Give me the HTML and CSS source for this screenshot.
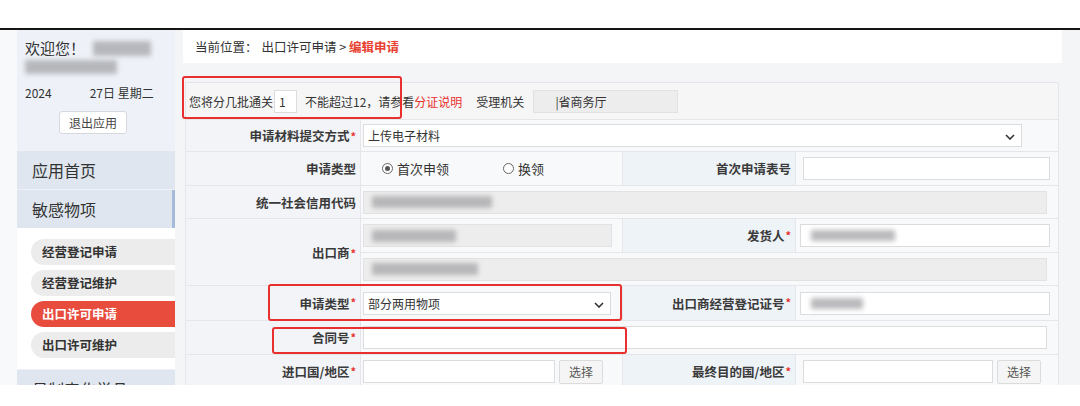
FILE: index.html
```html
<!DOCTYPE html>
<html lang="zh-CN">
<head>
<meta charset="utf-8">
<title>编辑申请</title>
<link rel="stylesheet" href="styles.css">
</head>
<body>
<div class="page">
  <div class="topband"></div>
  <div class="app">
    <aside class="sidebar">
      <div class="side-panel">
        <div class="user">
          <div class="welcome">欢迎您！<span class="blur b1"></span></div>
          <div class="blur-line"><span class="blur b2"></span></div>
          <div class="date">2024<span class="gap"></span>27日 星期二</div>
          <div class="logout-wrap"><span class="logout">退出应用</span></div>
        </div>
        <nav class="menu">
          <div class="menu-item">应用首页</div>
          <div class="menu-item active">敏感物项</div>
          <div class="submenu">
            <div class="pill">经营登记申请</div>
            <div class="pill">经营登记维护</div>
            <div class="pill on">出口许可申请</div>
            <div class="pill">出口许可维护</div>
          </div>
          <div class="menu-item">易制毒化学品</div>
        </nav>
      </div>
    </aside>
    <main class="main">
      <div class="crumb">当前位置：<span class="path">出口许可申请 &gt; </span><span class="cur">编辑申请</span></div>
      <div class="form">
        <div class="batch span4">
          <span>您将分几批通关</span>
          <span class="inp small">1</span>
          <span class="hint">不能超过12，请参看<span class="red">分证说明</span></span>
          <span class="org">受理机关</span>
          <span class="inp ro orgbox">|省商务厅</span>
        </div>

        <div class="lab">申请材料提交方式<i>*</i></div>
        <div class="val span3"><span class="inp sel w-full-sel">上传电子材料<svg class="chev" width="10" height="6" viewBox="0 0 10 6"><path d="M1 1 L5 5 L9 1" fill="none" stroke="#333" stroke-width="1.6"/></svg></span></div>

        <div class="lab">申请类型</div>
        <div class="val radios"><span class="radio on"></span><span class="rtext">首次申领</span><span class="radio r2"></span><span class="rtext">换领</span></div>
        <div class="lab lab2">首次申请表号</div>
        <div class="val v2"><span class="inp w247"></span></div>

        <div class="lab">统一社会信用代码</div>
        <div class="val span3"><span class="inp ro wide"><span class="blur b3"></span></span></div>

        <div class="lab rspan2">出口商<i>*</i></div>
        <div class="val"><span class="inp ro w249"><span class="blur b4"></span></span></div>
        <div class="lab lab2">发货人<i>*</i></div>
        <div class="val v2b"><span class="inp w250"><span class="blur b5"></span></span></div>
        <div class="val span3"><span class="inp ro wide"><span class="blur b6"></span></span></div>

        <div class="lab">申请类型<i>*</i></div>
        <div class="val"><span class="inp sel w248">部分两用物项<svg class="chev" width="10" height="6" viewBox="0 0 10 6"><path d="M1 1 L5 5 L9 1" fill="none" stroke="#333" stroke-width="1.6"/></svg></span></div>
        <div class="lab lab2">出口商经营登记证号<i>*</i></div>
        <div class="val v2b"><span class="inp w250"><span class="blur b7"></span></span></div>

        <div class="lab">合同号<i>*</i></div>
        <div class="val span3"><span class="inp wide"></span></div>

        <div class="lab">进口国/地区<i>*</i></div>
        <div class="val"><span class="inp w192"></span><span class="btn">选择</span></div>
        <div class="lab lab2">最终目的国/地区<i>*</i></div>
        <div class="val v2"><span class="inp w190"></span><span class="btn">选择</span></div>
      </div>
    </main>
    <div class="mark m1"></div>
    <div class="mark m2"></div>
    <div class="mark m3"></div>
  </div>
</div>
</body>
</html>
```

FILE: styles.css
```css
* { box-sizing: border-box; }
html, body { margin: 0; padding: 0; background: #fff; }
body {
  width: 1080px;
  height: 406px;
  overflow: hidden;
  font-family: "Noto Sans CJK SC", "Microsoft YaHei", sans-serif;
  color: #333;
}
.page { position: relative; width: 1080px; height: 406px; }
.topband {
  height: 30px;
  border-bottom: 2px solid #151515;
  background: #fff;
}
.app {
  display: flex;
  height: 355px;
  overflow: hidden;
  background: #f4f5f7;
}
.sidebar {
  width: 175px;
  flex: none;
  background: #f8f9fb;
  padding-left: 17px;
}
.side-panel {
  height: 100%;
  background: #eef2f8;
}
.user { padding: 8px 0 0 8px; height: 121px; }
.welcome {
  font-size: 15px;
  line-height: 20px;
  display: flex;
  align-items: center;
  color: #333;
}
.blur {
  display: inline-block;
  background: #a9a9ad;
  filter: blur(2.5px);
  opacity: 0.8;
}
.b1 { width: 58px; height: 15px; margin-left: 8px; }
.blur-line { height: 18px; display: flex; align-items: center; }
.b2 { width: 92px; height: 14px; }
.date {
  margin-top: 9px;
  font-size: 12px;
  line-height: 16px;
  color: #333;
  display: flex;
  align-items: center;
}
.gap { display: inline-block; width: 38px; }
.logout-wrap { padding-left: 34px; margin-top: 8px; }
.logout {
  display: inline-block;
  width: 68px;
  height: 23px;
  line-height: 21px;
  text-align: center;
  font-size: 12px;
  color: #444;
  background: #fff;
  border: 1px solid #d6d8dc;
  border-radius: 3px;
}
.menu { margin-top: 0; }
.menu-item {
  height: 38px;
  line-height: 38px;
  padding-left: 15px;
  font-size: 16px;
  color: #333;
  background: #dfe6ef;
  margin-bottom: 1px;
}
.menu-item.active { border-right: 3px solid #a6bbda; }
.submenu {
  background: #fff;
  padding: 11px 0 11px 14px;
  margin-top: -1px;
  margin-bottom: 1px;
}
.pill {
  height: 26px;
  line-height: 26px;
  padding-left: 11px;
  font-size: 12.5px;
  font-weight: 700;
  color: #333;
  background: #ececec;
  border-radius: 13px 0 0 13px;
  margin-bottom: 5px;
}
.pill:last-child { margin-bottom: 0; }
.pill.on { background: #e84c3d; color: #fff; }

.main {
  margin-left: 8px;
  width: 879px;
  flex: none;
}
.crumb {
  height: 33px;
  line-height: 33px;
  background: #fff;
  padding-left: 12px;
  font-size: 12.5px;
  color: #333;
}
.crumb .path { margin-left: 4px; }
.crumb .cur { color: #e8402f; font-weight: 700; }

.form {
  margin: 19px 4px 0 2px;
  display: grid;
  grid-template-columns: 175px 262px 173px 263px;
  grid-template-rows: 37px 32px 34px 33px 34px 33px 35px 34px 34px;
  border-top: 1px solid #e4e6ea;
  border-left: 1px solid #e4e6ea;
}
.form > div {
  border-right: 1px solid #e4e6ea;
  border-bottom: 1px solid #e4e6ea;
  display: flex;
  align-items: center;
}
.span4 { grid-column: span 4; }
.span3 { grid-column: span 3; }
.rspan2 { grid-row: span 2; }
.batch {
  background: #f6f6f6;
  padding-left: 3px;
  font-size: 12px;
  color: #333;
}
.lab {
  background: #f2f4f7;
  justify-content: flex-end;
  padding-right: 4px;
  font-size: 12.5px;
  font-weight: 700;
  color: #3a3a3a;
}
.lab i {
  color: #e8312f;
  font-style: normal;
  font-size: 11px;
  align-self: flex-start;
  margin-top: 8px;
  margin-left: 1px;
}
.lab.rspan2 i { margin-top: 26px; }
.lab2 { background: #eef3f8; }
.val {
  background: #f8f9fa;
  padding-left: 2px;
}
.v2 { padding-left: 7px; }
.v2b { padding-left: 4px; }
.inp {
  display: inline-flex;
  align-items: center;
  height: 23px;
  background: #fff;
  border: 1px solid #dcdcdc;
  font-size: 12px;
  color: #333;
  padding-left: 4px;
  position: relative;
}
.inp.ro { background: #ededed; border-color: #e2e2e2; }
.small { width: 23px; margin: 0 8px 0 1px; }
.hint { margin-right: 14px; }
.red { color: #e8312f; }
.org { margin-right: 9px; }
.orgbox { width: 145px; padding-left: 21px; font-size: 12px; }
.sel .chev { position: absolute; right: 6px; top: 9px; }
.w-full-sel { width: 659px; }
.wide { width: 684px; }
.w247 { width: 247px; }
.w249 { width: 249px; }
.w250 { width: 250px; }
.w248 { width: 248px; }
.w192 { width: 192px; }
.w190 { width: 190px; }
.b3 { width: 120px; height: 12px; margin-left: 4px; }
.b4 { width: 84px; height: 12px; margin-left: 4px; }
.b5 { width: 84px; height: 11px; margin-left: 6px; }
.b6 { width: 106px; height: 12px; margin-left: 4px; }
.b7 { width: 52px; height: 11px; margin-left: 6px; }
.btn {
  display: inline-flex;
  align-items: center;
  justify-content: center;
  width: 44px;
  height: 24px;
  margin-left: 4px;
  background: #f5f5f5;
  border: 1px solid #dcdcdc;
  border-radius: 2px;
  font-size: 12px;
  color: #555;
}
.radios { padding-left: 21px; font-size: 13px; }
.radio {
  width: 11px;
  height: 11px;
  border: 1px solid #666;
  border-radius: 50%;
  background: #fff;
  position: relative;
  display: inline-block;
}
.radio.on::after {
  content: "";
  position: absolute;
  left: 2px; top: 2px;
  width: 5px; height: 5px;
  border-radius: 50%;
  background: #555;
}
.rtext { margin-left: 4px; }
.r2 { margin-left: 54px; }

.mark {
  position: absolute;
  border: 2px solid #e8312f;
  border-radius: 3px;
}
.m1 { left: 182px; top: 76px; width: 220px; height: 43px; }
.m2 { left: 268px; top: 284px; width: 354px; height: 37px; }
.m3 { left: 272px; top: 327px; width: 355px; height: 27px; }
```
